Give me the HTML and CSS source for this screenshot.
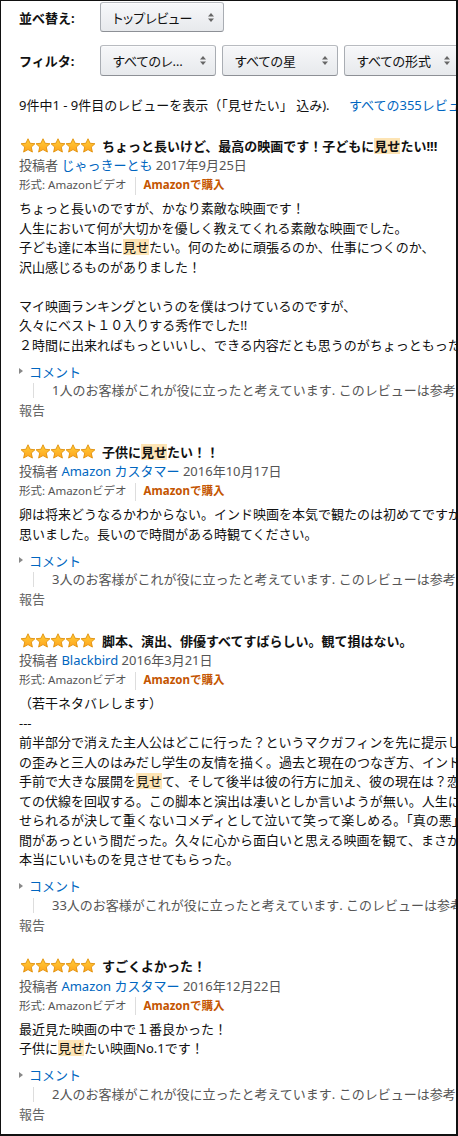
FILE: index.html
```html
<!DOCTYPE html>
<html lang="ja">
<head>
    <meta charset="UTF-8">
    <meta name="viewport" content="width=device-width, initial-scale=1.0">
    <title>カスタマーレビュー</title>
    <link rel="stylesheet" href="styles.css">
</head>

<body>
    <!-- shared star shape and gradient -->
    <svg class="defs" width="0" height="0" aria-hidden="true">
        <defs>
            <linearGradient id="starFill" x1="0" y1="0" x2="0" y2="1">
                <stop offset="0" stop-color="#ffce3a"/>
                <stop offset="1" stop-color="#ffa41c"/>
            </linearGradient>
            <polygon id="star" points="8,0.8 10.25,5.6 15.4,6.1 11.5,9.65 12.7,15 8,12.35 3.3,15 4.5,9.65 0.6,6.1 5.75,5.6"
                fill="url(#starFill)" stroke="#de8b00" stroke-width="0.9" stroke-linejoin="round"/>
        </defs>
    </svg>

    <div class="frame">
        <div class="control-row">
            <span class="control-label">並べ替え:</span>
            <div class="select select-sort">
                <span class="select-text">トップレビュー</span>
                <svg class="select-arrow" width="6" height="9" viewBox="0 0 6 9"><polygon points="0,3.5 3,0 6,3.5"/><polygon points="0,5.5 3,9 6,5.5"/></svg>
            </div>
        </div>

        <div class="control-row filter-row">
            <span class="control-label">フィルタ:</span>
            <div class="select">
                <span class="select-text">すべてのレビュー</span>
                <svg class="select-arrow" width="6" height="9" viewBox="0 0 6 9"><polygon points="0,3.5 3,0 6,3.5"/><polygon points="0,5.5 3,9 6,5.5"/></svg>
            </div>
            <div class="select">
                <span class="select-text">すべての星</span>
                <svg class="select-arrow" width="6" height="9" viewBox="0 0 6 9"><polygon points="0,3.5 3,0 6,3.5"/><polygon points="0,5.5 3,9 6,5.5"/></svg>
            </div>
            <div class="select">
                <span class="select-text">すべての形式</span>
                <svg class="select-arrow" width="6" height="9" viewBox="0 0 6 9"><polygon points="0,3.5 3,0 6,3.5"/><polygon points="0,5.5 3,9 6,5.5"/></svg>
            </div>
        </div>

        <p class="summary">9件中1 - 9件目のレビューを表示（「見せたい」 込み). <a class="all-link" href="javascript:;">すべての355レビューを表示</a></p>

        <!-- review 1 -->
        <div class="review">
            <div class="review-title">
                <svg class="stars" width="78" height="15" viewBox="0 0 80 16"><use href="#star"/><use href="#star" x="16"/><use href="#star" x="32"/><use href="#star" x="48"/><use href="#star" x="64"/></svg>
                <span>ちょっと長いけど、最高の映画です！子どもに<span class="hl">見せ</span>たい!!!</span>
            </div>
            <div class="byline">投稿者 <a href="javascript:;">じゃっきーとも</a> 2017年9月25日</div>
            <div class="format">形式: Amazonビデオ<span class="sep"></span><a class="buy" href="javascript:;">Amazonで購入</a></div>
            <div class="review-body">
                ちょっと長いのですが、かなり素敵な映画です！<br>
                人生において何が大切かを優しく教えてくれる素敵な映画でした。<br>
                子ども達に本当に<span class="hl">見せ</span>たい。何のために頑張るのか、仕事につくのか、<br>
                沢山感じるものがありました！<br>
                <br>
                マイ映画ランキングというのを僕はつけているのですが、<br>
                久々にベスト１０入りする秀作でした!!<br>
                ２時間に出来ればもっといいし、できる内容だとも思うのがちょっともったいないです。
            </div>
            <div class="comment"><span class="caret"></span><a href="javascript:;">コメント</a></div>
            <div class="helpful"><span class="helpful-text">1人のお客様がこれが役に立ったと考えています. このレビューは参考になりましたか？</span></div>
            <div class="report">報告</div>
        </div>

        <!-- review 2 -->
        <div class="review">
            <div class="review-title">
                <svg class="stars" width="78" height="15" viewBox="0 0 80 16"><use href="#star"/><use href="#star" x="16"/><use href="#star" x="32"/><use href="#star" x="48"/><use href="#star" x="64"/></svg>
                <span>子供に<span class="hl">見せ</span>たい！！</span>
            </div>
            <div class="byline">投稿者 <a href="javascript:;">Amazon カスタマー</a> 2016年10月17日</div>
            <div class="format">形式: Amazonビデオ<span class="sep"></span><a class="buy" href="javascript:;">Amazonで購入</a></div>
            <div class="review-body">
                卵は将来どうなるかわからない。インド映画を本気で観たのは初めてですが、とても良いと<br>
                思いました。長いので時間がある時観てください。
            </div>
            <div class="comment"><span class="caret"></span><a href="javascript:;">コメント</a></div>
            <div class="helpful"><span class="helpful-text">3人のお客様がこれが役に立ったと考えています. このレビューは参考になりましたか？</span></div>
            <div class="report">報告</div>
        </div>

        <!-- review 3 -->
        <div class="review">
            <div class="review-title">
                <svg class="stars" width="78" height="15" viewBox="0 0 80 16"><use href="#star"/><use href="#star" x="16"/><use href="#star" x="32"/><use href="#star" x="48"/><use href="#star" x="64"/></svg>
                <span>脚本、演出、俳優すべてすばらしい。観て損はない。</span>
            </div>
            <div class="byline">投稿者 <a href="javascript:;">Blackbird</a> 2016年3月21日</div>
            <div class="format">形式: Amazonビデオ<span class="sep"></span><a class="buy" href="javascript:;">Amazonで購入</a></div>
            <div class="review-body">
                （若干ネタバレします）<br>
                ---<br>
                前半部分で消えた主人公はどこに行った？というマクガフィンを先に提示し、<br>
                の歪みと三人のはみだし学生の友情を描く。過去と現在のつなぎ方、インドの<br>
                手前で大きな展開を<span class="hl">見せ</span>て、そして後半は彼の行方に加え、彼の現在は？恋の<br>
                ての伏線を回収する。この脚本と演出は凄いとしか言いようが無い。人生について<br>
                せられるが決して重くないコメディとして泣いて笑って楽しめる。「真の悪」<br>
                間があっという間だった。久々に心から面白いと思える映画を観て、まさか<br>
                本当にいいものを見させてもらった。
            </div>
            <div class="comment"><span class="caret"></span><a href="javascript:;">コメント</a></div>
            <div class="helpful"><span class="helpful-text">33人のお客様がこれが役に立ったと考えています. このレビューは参考になりましたか？</span></div>
            <div class="report">報告</div>
        </div>

        <!-- review 4 -->
        <div class="review">
            <div class="review-title">
                <svg class="stars" width="78" height="15" viewBox="0 0 80 16"><use href="#star"/><use href="#star" x="16"/><use href="#star" x="32"/><use href="#star" x="48"/><use href="#star" x="64"/></svg>
                <span>すごくよかった！</span>
            </div>
            <div class="byline">投稿者 <a href="javascript:;">Amazon カスタマー</a> 2016年12月22日</div>
            <div class="format">形式: Amazonビデオ<span class="sep"></span><a class="buy" href="javascript:;">Amazonで購入</a></div>
            <div class="review-body">
                最近見た映画の中で１番良かった！<br>
                子供に<span class="hl">見せ</span>たい映画No.1です！
            </div>
            <div class="comment"><span class="caret"></span><a href="javascript:;">コメント</a></div>
            <div class="helpful"><span class="helpful-text">2人のお客様がこれが役に立ったと考えています. このレビューは参考になりましたか？</span></div>
            <div class="report">報告</div>
        </div>
    </div>
</body>
</html>
```

FILE: styles.css
```css
*{
    margin: 0px;
    padding: 0px;
}

body{
    font-family: "Noto Sans", "Noto Sans CJK JP", sans-serif;
    font-size: 13px;
    color: #111;
    background-color: #fff;
}

a{
    color: #0066c0;
    text-decoration: none;
}

.defs{
    position: absolute;
}

.frame{
    width: 458px;
    height: 1136px;
    box-sizing: border-box;
    border: 1px solid #111;
    border-right-width: 2px;
    border-bottom-width: 2px;
    padding: 1px 0 0 18px;
    overflow: hidden;
    white-space: nowrap;
}

/* sort / filter controls */
.control-row{
    display: flex;
    align-items: center;
    gap: 6px;
    height: 30px;
}

.filter-row{
    margin-top: 13px;
    height: 31px;
}

.control-label{
    width: 75px;
    flex: none;
    font-weight: bold;
}

.select{
    flex: none;
    display: flex;
    align-items: center;
    justify-content: space-between;
    box-sizing: border-box;
    width: 116px;
    height: 100%;
    padding: 0 9px 0 12px;
    border: 1px solid #adb1b8;
    border-color: #b8bbc0 #a9adb3 #8d9096;
    border-radius: 3px;
    background: linear-gradient(#f7f8fa, #e7e9ec);
    box-shadow: 0 1px 0 rgba(255, 255, 255, .6) inset;
    font-feature-settings: "palt";
}

.select-sort{
    width: 124px;
}

.select-text{
    overflow: hidden;
    text-overflow: ellipsis;
    max-width: 76px;
}

.select-sort .select-text{
    max-width: none;
}

.select-arrow{
    flex: none;
    fill: #666;
}

.summary{
    margin-top: 19px;
    line-height: 20px;
}

.all-link{
    margin-left: 16px;
}

/* reviews */
.review{
    padding-top: 20px;
}

.review-title{
    display: flex;
    align-items: center;
    height: 20px;
    font-weight: bold;
}

.stars{
    flex: none;
    margin-right: 5px;
}

.hl{
    display: inline-block;
    line-height: 16px;
    background-color: #fde4b4;
}

.byline{
    line-height: 20px;
    color: #555;
}

.format{
    line-height: 20px;
    font-size: 11.5px;
    color: #555;
}

.sep{
    display: inline-block;
    width: 1px;
    height: 18px;
    margin: 0 8px;
    background-color: #ddd;
    vertical-align: middle;
}

.buy{
    color: #c45500;
    font-weight: bold;
}

.review-body{
    margin-top: 4px;
    line-height: 19.5px;
}

.comment{
    display: flex;
    align-items: center;
    margin-top: 6px;
    height: 20px;
}

.caret{
    width: 0;
    height: 0;
    margin-right: 6px;
    border-left: 4px solid #888;
    border-top: 3.5px solid transparent;
    border-bottom: 3.5px solid transparent;
}

.helpful{
    padding-left: 14px;
    line-height: 19px;
    color: #555;
}

.helpful-text{
    display: inline-block;
    line-height: 15px;
    padding-left: 18px;
    border-left: 1px solid #ddd;
}

.report{
    line-height: 21px;
    color: #666;
}
```
